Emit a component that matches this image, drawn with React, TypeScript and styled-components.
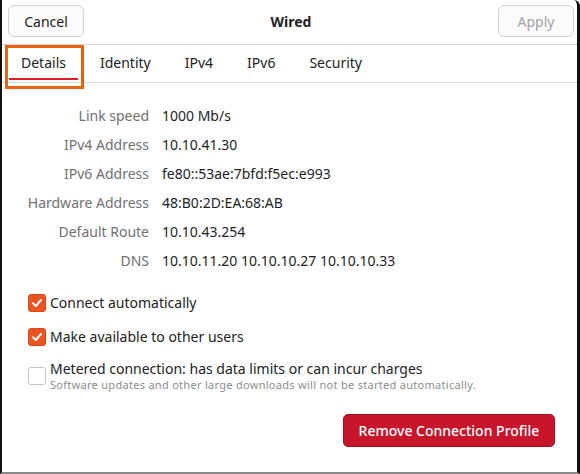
import React from 'react'
import styled, { createGlobalStyle } from 'styled-components'

const GlobalStyle = createGlobalStyle`
	html, body {
		margin: 0;
		padding: 0;
		background: #ffffff;
	}
	* {
		box-sizing: border-box;
	}
`

const Window = styled.div`
	width: 580px;
	height: 474px;
	background: #ffffff;
	border-left: 2px solid #111;
	border-right: 3px solid #111;
	border-bottom: 2px solid #8a8a8a;
	border-top-right-radius: 6px;
	font-family: 'Noto Sans', 'Open Sans', sans-serif;
	font-size: 14px;
	color: #222;
	display: flex;
	flex-direction: column;
	overflow: hidden;
`

const HeaderBar = styled.header`
	height: 45px;
	padding: 5px 3px 0 6px;
	display: grid;
	grid-template-columns: 76px 1fr 76px;
	align-items: start;
	border-bottom: 1px solid #d6d6d6;
`

const HeaderButton = styled.button<{ $disabled?: boolean }>`
	height: 32px;
	border: 1px solid #d2d2d2;
	border-radius: 6px;
	background: #fbfbfb;
	font-family: inherit;
	font-size: 14px;
	color: ${({ $disabled }) => ($disabled ? '#a3a3a3' : '#222')};
	padding: 0;
`

const Title = styled.h1`
	margin: 0;
	height: 32px;
	line-height: 33px;
	text-align: center;
	font-size: 14px;
	font-weight: 700;
	color: #222;
`

const TabStrip = styled.nav`
	height: 38px;
	padding-left: 7px;
	display: flex;
	gap: 10px;
	border-bottom: 1px solid #d6d6d6;
`

const Tab = styled.div<{ $active?: boolean }>`
	position: relative;
	padding: 0 12px;
	display: flex;
	align-items: center;
	color: #222;
	box-shadow: ${({ $active }) => ($active ? 'inset 0 -2px 0 #e01b24' : 'none')};
	margin-bottom: 2px;
`

const Highlight = styled.span`
	position: absolute;
	left: -4px;
	right: -6px;
	top: 0;
	bottom: -9px;
	border: 3px solid #e8650f;
	pointer-events: none;
`

const Content = styled.main`
	padding: 18px 0 0 0;
	display: flex;
	flex-direction: column;
	flex: 1;
`

const DetailGrid = styled.dl`
	margin: 0;
	display: grid;
	grid-template-columns: 147px 1fr;
	column-gap: 13px;
	grid-auto-rows: 29px;
	align-items: center;
`

const DetailLabel = styled.dt`
	text-align: right;
	color: #717171;
`

const DetailValue = styled.dd`
	margin: 0;
	color: #1e1e1e;
`

const Options = styled.div`
	margin-top: 17px;
	padding-left: 26px;
	display: flex;
	flex-direction: column;
	gap: 12px;
`

const Option = styled.label`
	display: flex;
	align-items: center;
	gap: 4px;
	min-height: 22px;
`

const Box = styled.span<{ $checked?: boolean }>`
	width: 18px;
	height: 18px;
	flex: none;
	border-radius: 3px;
	display: flex;
	align-items: center;
	justify-content: center;
	background: ${({ $checked }) => ($checked ? '#e95420' : '#ffffff')};
	border: 1px solid ${({ $checked }) => ($checked ? '#d84a18' : '#c4c4c4')};
`

const OptionText = styled.span`
	display: flex;
	flex-direction: column;
	color: #222;
	line-height: 18px;
`

const OptionHint = styled.span`
	font-size: 11px;
	line-height: 14px;
	color: #8c8c8c;
	letter-spacing: 0.29px;
`

const Footer = styled.div`
	margin-top: auto;
	padding: 0 22px 25px 0;
	display: flex;
	justify-content: flex-end;
`

const DangerButton = styled.button`
	width: 212px;
	height: 33px;
	border-radius: 5px;
	border: 1px solid #a5101f;
	background: #c7162b;
	color: #ffffff;
	font-family: inherit;
	font-size: 14px;
	font-weight: 500;
`

const Check = () => (
	<svg width='12' height='12' viewBox='0 0 12 12'>
		<path d='M2 6.2 L4.8 9 L10 3' fill='none' stroke='#fff' strokeWidth='2' strokeLinecap='round' strokeLinejoin='round' />
	</svg>
)

const details: [string, string][] = [
	['Link speed', '1000 Mb/s'],
	['IPv4 Address', '10.10.41.30'],
	['IPv6 Address', 'fe80::53ae:7bfd:f5ec:e993'],
	['Hardware Address', '48:B0:2D:EA:68:AB'],
	['Default Route', '10.10.43.254'],
	['DNS', '10.10.11.20 10.10.10.27 10.10.10.33'],
]

const tabs = ['Details', 'Identity', 'IPv4', 'IPv6', 'Security']

const App = () => {
	return (
		<>
			<GlobalStyle />
			<Window>
				<HeaderBar>
					<HeaderButton>Cancel</HeaderButton>
					<Title>Wired</Title>
					<HeaderButton $disabled>Apply</HeaderButton>
				</HeaderBar>
				<TabStrip>
					{tabs.map((t, i) => (
						<Tab key={t} $active={i === 0}>
							{t}
							{i === 0 && <Highlight />}
						</Tab>
					))}
				</TabStrip>
				<Content>
					<DetailGrid>
						{details.map(([label, value]) => (
							<React.Fragment key={label}>
								<DetailLabel>{label}</DetailLabel>
								<DetailValue>{value}</DetailValue>
							</React.Fragment>
						))}
					</DetailGrid>
					<Options>
						<Option>
							<Box $checked>
								<Check />
							</Box>
							<OptionText>Connect automatically</OptionText>
						</Option>
						<Option>
							<Box $checked>
								<Check />
							</Box>
							<OptionText>Make available to other users</OptionText>
						</Option>
						<Option>
							<Box />
							<OptionText>
								Metered connection: has data limits or can incur charges
								<OptionHint>
									Software updates and other large downloads will not be started automatically.
								</OptionHint>
							</OptionText>
						</Option>
					</Options>
					<Footer>
						<DangerButton>Remove Connection Profile</DangerButton>
					</Footer>
				</Content>
			</Window>
		</>
	)
}

export default App
